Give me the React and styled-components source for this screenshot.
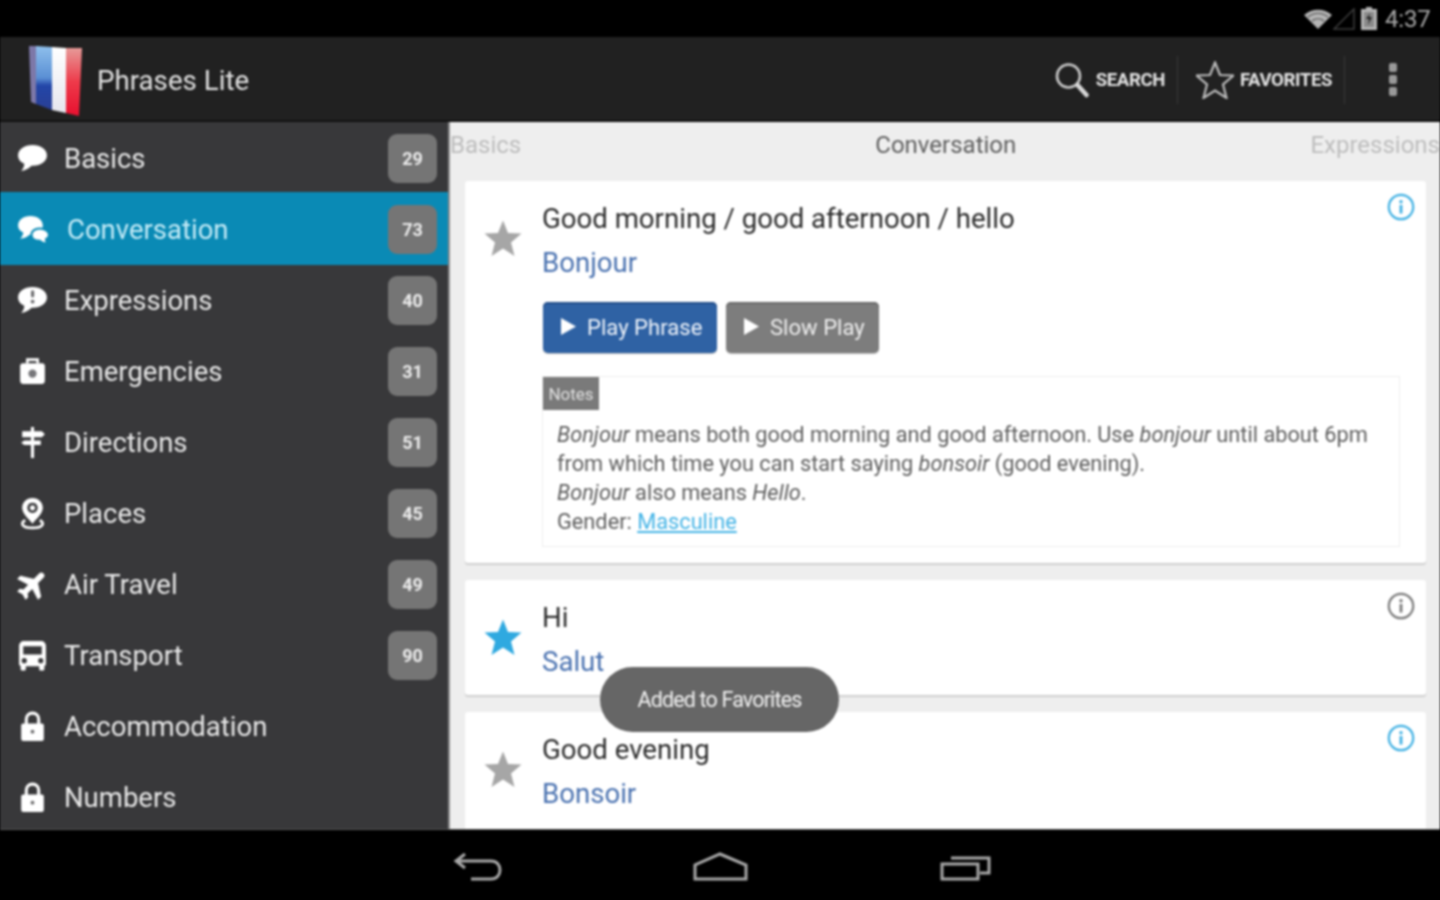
import React from 'react'
import styled, { createGlobalStyle } from 'styled-components'

const GlobalStyle = createGlobalStyle`
  html, body { margin: 0; padding: 0; background: #000; }
  body { font-family: Roboto, "Liberation Sans", sans-serif; }
  * { box-sizing: border-box; }
`

const Screen = styled.div`
  width: 1440px;
  height: 900px;
  display: flex;
  flex-direction: column;
  overflow: hidden;
  position: relative;
  background: #000;
  filter: blur(0.8px);
`

const StatusBar = styled.div`
  height: 37px;
  flex: none;
  background: #000;
  display: flex;
  align-items: center;
  justify-content: flex-end;
  padding-right: 9px;
  color: #a8a8a8;
`
const Clock = styled.span`
  font-size: 24px;
  width: 46px;
  margin-left: 8px;
  letter-spacing: -0.2px;
`

const ActionBar = styled.header`
  height: 85px;
  flex: none;
  background: #212121;
  border-bottom: 2px solid #111;
  display: flex;
  align-items: center;
  padding: 2px 0 0 28px;
`
const AppTitle = styled.h1`
  margin: 2px 0 0 15px;
  font-size: 27.7px;
  font-weight: 400;
  color: #e2e2e2;
  flex: 1;
`
const ActionItem = styled.div`
  display: flex;
  align-items: center;
  gap: ${({ $gap }) => $gap}px;
  padding: 0 12px 0 0;
  font-size: 18.6px;
  font-weight: 700;
  letter-spacing: -0.4px;
  color: #e4e4e4;
  height: 48px;
`
const Divider = styled.span`
  width: 1px;
  height: 48px;
  background: #3a3a3a;
  margin: 0 18px 0 0;
`
const Dots = styled.div`
  display: flex;
  flex-direction: column;
  gap: 3px;
  margin: 0 43px 0 26px;
`
const Dot = styled.span`
  width: 8px;
  height: 9px;
  border-radius: 2px;
  background: #999;
`

const Main = styled.div`
  flex: 1;
  min-height: 0;
  display: flex;
`
const Sidebar = styled.nav`
  width: 450px;
  flex: none;
  background: #38383a;
  border-right: 2px solid #8a8a8a;
  padding-top: 1px;
  overflow: hidden;
`
const Row = styled.div`
  height: 71px;
  display: flex;
  align-items: center;
  padding: 0 11px 0 14px;
  background: ${({ $active }) => ($active ? '#0a8ab5' : 'transparent')};
  box-shadow: ${({ $active }) => ($active ? '0 -2px 0 #0a8ab5' : 'none')};
`
const RowIcon = styled.span`
  width: 36px;
  height: 36px;
  flex: none;
  display: flex;
  align-items: center;
  justify-content: center;
  color: #fff;
`
const RowLabel = styled.span`
  flex: 1;
  margin-left: ${({ $active }) => ($active ? 17 : 14)}px;
  font-size: 27.5px;
  color: ${({ $active }) => ($active ? '#c4ebf7' : '#e8e8e8')};
`
const Count = styled.span`
  width: 49px;
  height: 49px;
  border-radius: 9px;
  background: #757575;
  color: #ececec;
  font-size: 18px;
  font-weight: 700;
  display: flex;
  align-items: center;
  justify-content: center;
`

const Content = styled.main`
  flex: 1;
  min-width: 0;
  background: #eeeeee;
  overflow: hidden;
`
const Tabs = styled.div`
  height: 59px;
  display: flex;
  justify-content: space-between;
  align-items: center;
  font-size: 24px;
  padding-bottom: 13px;
`
const Tab = styled.span`
  color: ${({ $current }) => ($current ? '#5e5e5e' : '#bdbdbd')};
  ${({ $current }) => $current && 'margin-left: 60px;'}
`
const Cards = styled.div`
  display: flex;
  flex-direction: column;
  gap: 17px;
  padding: 0 14px 0 15px;
`
const Card = styled.article`
  position: relative;
  background: #fff;
  border-radius: 3px;
  box-shadow: 0 2px 1px #cfcfcf;
  padding: 16px 26px ${({ $pad }) => $pad}px 0;
  display: grid;
  grid-template-columns: 77px 1fr;
  flex: none;
`
const StarCell = styled.div`
  height: 88px;
  padding: 0 1px 6px 0;
  display: flex;
  align-items: center;
  justify-content: center;
`
const Phrase = styled.div`
  font-size: 27.6px;
  line-height: 44px;
  color: #2c2c2c;
`
const Translation = styled.div`
  font-size: 27.6px;
  line-height: 44px;
  color: #4a72b0;
`
const InfoButton = styled.span`
  position: absolute;
  top: 12px;
  right: 11px;
  display: flex;
`
const Buttons = styled.div`
  display: flex;
  gap: 9px;
  margin: 17px 0 23px 1px;
`
const PlayButton = styled.button`
  height: 51px;
  width: ${({ $width }) => $width}px;
  border: none;
  border-radius: 5px;
  background: ${({ $primary }) => ($primary ? '#2f62a4' : '#7d7d7d')};
  box-shadow: inset 0 2px 0 ${({ $primary }) => ($primary ? '#234e8a' : '#6a6a6a')}, 0 1px 1px #bbb;
  color: ${({ $primary }) => ($primary ? '#eef3fa' : '#eeeeee')};
  font-family: inherit;
  font-size: 22.1px;
  display: flex;
  align-items: center;
  gap: 11px;
  padding: 0 0 2px 18px;
`
const NotesBox = styled.section`
  border: 1px solid #eeeeee;
  height: 171px;
`
const NotesTag = styled.div`
  width: 56px;
  height: 33px;
  background: #7a7a7a;
  color: #e0e0e0;
  font-size: 17px;
  display: flex;
  align-items: center;
  justify-content: center;
`
const NotesText = styled.div`
  padding: 10px 14px 0 14px;
  font-size: 21.75px;
  line-height: 29px;
  color: #5e5e5e;
  em { font-style: italic; }
`
const GenderLink = styled.a`
  color: #45b4e6;
  text-decoration: underline;
`
const Toast = styled.div`
  position: absolute;
  left: 600px;
  top: 667px;
  width: 239px;
  height: 65px;
  border-radius: 33px;
  background: #666666;
  color: #f2f2f2;
  font-size: 21.5px;
  letter-spacing: -0.85px;
  display: flex;
  align-items: center;
  justify-content: center;
`

const NavBar = styled.footer`
  height: 71px;
  flex: none;
  background: #000;
  border-top: 1px solid #555;
  display: grid;
  grid-template-columns: 453px 240px 247px 1fr;
  padding-top: 22px;
`
const NavCell = styled.div`
  grid-column: ${({ $col }) => $col};
`

const WifiIcon = () => (
  <svg width="30" height="22" viewBox="0 0 30 22">
    <path d="M1 7 C9 0 21 0 29 7 L15 21 Z" fill="#b4b4b4" />
    <path d="M5 9 C11 4 19 4 25 9 M9 13 C13 10 17 10 21 13" stroke="#000" strokeWidth="1.2" fill="none" opacity="0.55" />
  </svg>
)
const SignalIcon = () => (
  <svg width="22" height="22" viewBox="0 0 22 22">
    <path d="M1 21 L21 1 V21 Z" fill="none" stroke="#3d3d3d" strokeWidth="1.5" />
  </svg>
)
const BatteryIcon = () => (
  <svg width="16" height="23" viewBox="0 0 16 23" style={{ marginLeft: 6 }}>
    <path d="M5 0 H11 V2 H16 V23 H0 V2 H5 Z" fill="#b4b4b4" />
    <path d="M3 5 H13 V20 H3 Z" fill="#8a8a8a" />
    <path d="M9 6 L5 12 H8 L7 18 L11 10 H8 Z" fill="#222" />
  </svg>
)

const FlagLogo = () => (
  <svg width="54" height="72" viewBox="0 0 54 72">
    <defs>
      <linearGradient id="blue" x1="0" y1="0" x2="0" y2="1">
        <stop offset="0" stopColor="#8fc0ec" />
        <stop offset="0.5" stopColor="#5a8fd4" />
        <stop offset="0.62" stopColor="#2346a8" />
        <stop offset="1" stopColor="#2a3f95" />
      </linearGradient>
      <linearGradient id="white" x1="0" y1="0" x2="0" y2="1">
        <stop offset="0" stopColor="#ffffff" />
        <stop offset="1" stopColor="#e6e6ee" />
      </linearGradient>
      <linearGradient id="red" x1="0" y1="0" x2="0" y2="1">
        <stop offset="0" stopColor="#e79a98" />
        <stop offset="0.5" stopColor="#ee3a4a" />
        <stop offset="1" stopColor="#e8102f" />
      </linearGradient>
    </defs>
    <path d="M1 2 L9 2 L8 60 L3 58 Z" fill="#7d78a8" />
    <path d="M8 2 L24 3 L24 66 L8 60 Z" fill="url(#blue)" />
    <path d="M24 3 L38 4 L38 69 L24 66 Z" fill="url(#white)" />
    <path d="M38 4 L54 4 L51 72 L38 69 Z" fill="url(#red)" />
  </svg>
)

const SearchIcon = () => (
  <svg width="36" height="36" viewBox="0 0 35 36" fill="none">
    <circle cx="14" cy="14" r="11.5" stroke="#c8c8c8" strokeWidth="2.6" />
    <path d="M23 23 L32 33" stroke="#d8d8d8" strokeWidth="4.5" strokeLinecap="round" />
  </svg>
)
const starPoints = '19,1.5 24,14 37.5,14.5 27,23.5 30.5,37 19,29.5 7.5,37 11,23.5 0.5,14.5 14,14'
const OutlineStar = () => (
  <svg width="38" height="38" viewBox="0 0 38 38">
    <polygon points={starPoints} fill="none" stroke="#bdbdbd" strokeWidth="2.2" />
  </svg>
)
const FilledStar = ({ color }) => (
  <svg width="38" height="38" viewBox="0 0 38 38">
    <polygon points={starPoints} fill={color} />
  </svg>
)
const InfoIcon = ({ color }) => (
  <svg width="28" height="28" viewBox="0 0 28 28">
    <circle cx="14" cy="14" r="12.2" fill="none" stroke={color} strokeWidth="2.2" />
    <circle cx="14" cy="8.8" r="1.7" fill={color} />
    <rect x="12.6" y="12" width="2.8" height="8.5" fill={color} />
  </svg>
)
const PlayIcon = () => (
  <svg width="15" height="17" viewBox="0 0 15 17">
    <path d="M0 0 L15 8.5 L0 17 Z" fill="#fff" />
  </svg>
)

const bubble = 'M16 3 C8 3 2 7.5 2 13 C2 16.5 4.5 19.5 8 21 C8 23.5 7 26 5 28 C9.5 27.5 13 25.5 15 23 C15.5 23 16 23 16.5 23 C24 23 30 18.5 30 13 C30 7.5 24 3 16 3 Z'

const icons = {
  basics: <path d={bubble} fill="currentColor" />,
  conversation: (
    <>
      <path d="M14 3 C7 3 2 7 2 12 C2 15 4 17.5 7 19 C7 21 6 23 4 25 C8 24.5 11 23 13 21 C14 21 16 21 18 20 C24 20 26 15 26 12 C26 7 21 3 14 3 Z" fill="currentColor" />
      <path d="M23 15 C18 15 15 18 15 21 C15 24.5 18 27 23 27 C25 29 28 30 31 30 C29.5 28.5 29 27 29 25.5 C31 24.5 32 23 32 21 C32 18 28 15 23 15 Z" fill="currentColor" stroke="#0a8ab5" strokeWidth="2" />
    </>
  ),
  expressions: (
    <>
      <path d={bubble} fill="currentColor" />
      <rect x="14.6" y="6" width="3" height="7" rx="1.5" fill="#6a6a6c" />
      <circle cx="16.1" cy="17" r="1.8" fill="#6a6a6c" />
    </>
  ),
  emergencies: (
    <>
      <path d="M11 8 V4.5 H21 V8" fill="none" stroke="currentColor" strokeWidth="2.5" />
      <rect x="4" y="8" width="24" height="20" rx="3" fill="currentColor" />
      <circle cx="16" cy="18" r="4" fill="#77777a" />
    </>
  ),
  directions: (
    <path d="M14.5 1 H17.5 V5 H25 L28 8 L25 11 H17.5 V14 H24 V18.5 H17.5 V31 H14.5 V18.5 H8 L5 16.2 L8 14 H14.5 V11 H6 V5 H14.5 Z" fill="currentColor" />
  ),
  places: (
    <>
      <path d="M16 1 C10 1 6 5.5 6 10.5 C6 16 12 21 16 26 C20 21 26 16 26 10.5 C26 5.5 22 1 16 1 Z M16 5.5 A5 5 0 1 1 15.99 5.5 Z" fill="currentColor" fillRule="evenodd" />
      <circle cx="16" cy="10.5" r="2.5" fill="currentColor" />
      <path d="M9 22.5 C4 25 5 30 16 30 C27 30 28 25 23 22.5" fill="none" stroke="currentColor" strokeWidth="2.6" />
    </>
  ),
  air: (
    <g transform="translate(16 16) rotate(45) scale(1.42) translate(-11.5 -12)">
      <path d="M21 16v-2l-8-5V3.5c0-.83-.67-1.5-1.5-1.5S10 2.67 10 3.5V9l-8 5v2l8-2.5V19l-2 1.5V22l3.5-1 3.5 1v-1.5L13 19v-5.5l8 2.5z" fill="currentColor" stroke="currentColor" strokeWidth="1.1" />
    </g>
  ),
  transport: (
    <path fillRule="evenodd" d="M8 2 H24 C27 2 29 4 29 7 V24 C29 25 28.5 26 27.5 26 V29 C27.5 30 27 30.5 26 30.5 H24 C23 30.5 22.5 30 22.5 29 V26.5 H9.5 V29 C9.5 30 9 30.5 8 30.5 H6 C5 30.5 4.5 30 4.5 29 V26 C3.5 26 3 25 3 24 V7 C3 4 5 2 8 2 Z M7 7 V15 H25 V7 Z M8 18.5 A2.5 2.5 0 1 0 8.01 23.5 A2.5 2.5 0 1 0 8 18.5 Z M24 18.5 A2.5 2.5 0 1 0 24.01 23.5 A2.5 2.5 0 1 0 24 18.5 Z" fill="currentColor" />
  ),
  lock: (
    <>
      <path d="M10 14 V9 C10 5.5 12.5 3 16 3 C19.5 3 22 5.5 22 9 V14" fill="none" stroke="currentColor" strokeWidth="3" />
      <rect x="5" y="13" width="22" height="17" rx="2" fill="currentColor" />
      <circle cx="16" cy="21" r="1.8" fill="#6a6a6c" />
    </>
  ),
}

const topics = [
  { name: 'Basics', icon: 'basics', count: 29 },
  { name: 'Conversation', icon: 'conversation', count: 73, active: true },
  { name: 'Expressions', icon: 'expressions', count: 40 },
  { name: 'Emergencies', icon: 'emergencies', count: 31 },
  { name: 'Directions', icon: 'directions', count: 51 },
  { name: 'Places', icon: 'places', count: 45 },
  { name: 'Air Travel', icon: 'air', count: 49 },
  { name: 'Transport', icon: 'transport', count: 90 },
  { name: 'Accommodation', icon: 'lock' },
  { name: 'Numbers', icon: 'lock' },
]

const App = () => (
  <Screen>
    <GlobalStyle />
    <StatusBar>
      <WifiIcon />
      <SignalIcon />
      <BatteryIcon />
      <Clock>4:37</Clock>
    </StatusBar>
    <ActionBar>
      <FlagLogo />
      <AppTitle>Phrases Lite</AppTitle>
      <ActionItem $gap={6}>
        <SearchIcon />
        SEARCH
      </ActionItem>
      <Divider />
      <ActionItem $gap={6}>
        <OutlineStar />
        FAVORITES
      </ActionItem>
      <Divider />
      <Dots>
        <Dot />
        <Dot />
        <Dot />
      </Dots>
    </ActionBar>
    <Main>
      <Sidebar>
        {topics.map((t) => (
          <Row key={t.name} $active={t.active}>
            <RowIcon>
              <svg width="33" height="33" viewBox="0 0 32 32">{icons[t.icon]}</svg>
            </RowIcon>
            <RowLabel $active={t.active}>{t.name}</RowLabel>
            {t.count && <Count>{t.count}</Count>}
          </Row>
        ))}
      </Sidebar>
      <Content>
        <Tabs>
          <Tab>Basics</Tab>
          <Tab $current>Conversation</Tab>
          <Tab>Expressions</Tab>
        </Tabs>
        <Cards>
          <Card $pad={16}>
            <StarCell>
              <FilledStar color="#a6a6a6" />
            </StarCell>
            <div>
              <Phrase>Good morning / good afternoon / hello</Phrase>
              <Translation>Bonjour</Translation>
              <Buttons>
                <PlayButton $primary $width={174}>
                  <PlayIcon />
                  Play Phrase
                </PlayButton>
                <PlayButton $width={153}>
                  <PlayIcon />
                  Slow Play
                </PlayButton>
              </Buttons>
              <NotesBox>
                <NotesTag>Notes</NotesTag>
                <NotesText>
                  <em>Bonjour</em> means both good morning and good afternoon. Use <em>bonjour</em> until about 6pm
                  <br />
                  from which time you can start saying <em>bonsoir</em> (good evening).
                  <br />
                  <em>Bonjour</em> also means <em>Hello</em>.
                  <br />
                  Gender: <GenderLink>Masculine</GenderLink>
                </NotesText>
              </NotesBox>
            </div>
            <InfoButton>
              <InfoIcon color="#3fb0e3" />
            </InfoButton>
          </Card>
          <Card $pad={11}>
            <StarCell>
              <FilledStar color="#2fa9e0" />
            </StarCell>
            <div>
              <Phrase>Hi</Phrase>
              <Translation>Salut</Translation>
            </div>
            <InfoButton>
              <InfoIcon color="#7a7a7a" />
            </InfoButton>
          </Card>
          <Card $pad={40}>
            <StarCell>
              <FilledStar color="#a6a6a6" />
            </StarCell>
            <div>
              <Phrase>Good evening</Phrase>
              <Translation>Bonsoir</Translation>
            </div>
            <InfoButton>
              <InfoIcon color="#3fb0e3" />
            </InfoButton>
          </Card>
        </Cards>
      </Content>
    </Main>
    <Toast>Added to Favorites</Toast>
    <NavBar>
      <NavCell $col={2}>
        <svg width="50" height="30" viewBox="0 0 50 30" fill="none" stroke="#a8a8a8" strokeWidth="3">
          <path d="M12 2 L3 9 L12 16 M3 9 H38 C50 9 50 27 38 27 H18" />
        </svg>
      </NavCell>
      <NavCell $col={3}>
        <svg width="56" height="30" viewBox="0 0 56 30" fill="none" stroke="#a8a8a8" strokeWidth="3">
          <path d="M2 27 V13 L27 2 L53 13 V27 Z" />
        </svg>
      </NavCell>
      <NavCell $col={4}>
        <svg width="52" height="30" viewBox="0 0 52 30" fill="none" stroke="#a8a8a8" strokeWidth="3">
          <path d="M2 12 H38 V27 H2 Z" />
          <path d="M11 6 H49 V21 H40" />
        </svg>
      </NavCell>
    </NavBar>
  </Screen>
)

export default App
